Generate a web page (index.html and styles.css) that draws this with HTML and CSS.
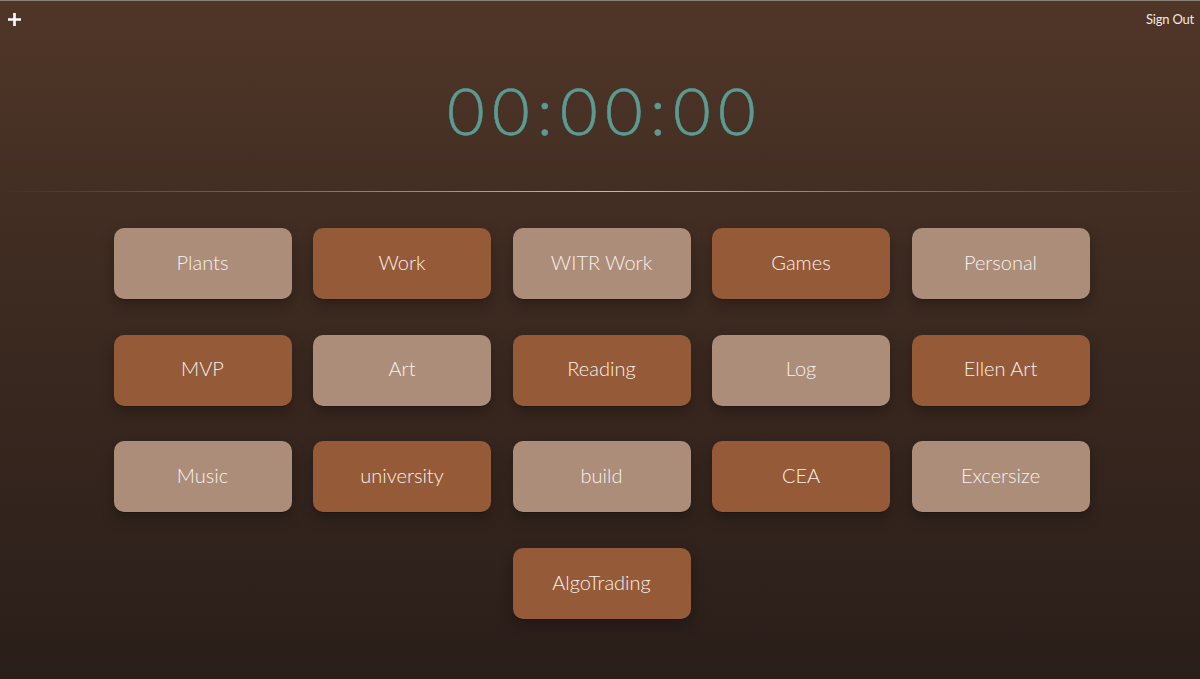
FILE: index.html
```html
<!DOCTYPE html>
<html lang="en">
<head>
<meta charset="utf-8">
<title>Timer</title>
<link rel="stylesheet" href="styles.css">
</head>
<body>
<div class="page">
  <header class="topbar">
    <button class="add" aria-label="Add">
      <svg width="15" height="15" viewBox="0 0 15 15"><path d="M7.5 1v13M1 7.5h13" stroke="#fff" stroke-width="2.6" stroke-linecap="butt"/></svg>
    </button>
    <a class="signout">Sign Out</a>
  </header>
  <div class="timer">00:00:00</div>
  <div class="divider"></div>
  <main class="grid">
    <button class="tile light">Plants</button>
    <button class="tile dark">Work</button>
    <button class="tile light">WITR Work</button>
    <button class="tile dark">Games</button>
    <button class="tile light">Personal</button>
    <button class="tile dark">MVP</button>
    <button class="tile light">Art</button>
    <button class="tile dark">Reading</button>
    <button class="tile light">Log</button>
    <button class="tile dark">Ellen Art</button>
    <button class="tile light">Music</button>
    <button class="tile dark">university</button>
    <button class="tile light">build</button>
    <button class="tile dark">CEA</button>
    <button class="tile light">Excersize</button>
    <button class="tile dark">AlgoTrading</button>
  </main>
</div>
</body>
</html>
```
FILE: styles.css
```css
html, body {
  margin: 0;
  padding: 0;
  height: 100%;
}
body {
  background: linear-gradient(180deg, #503628 0%, #3e2b21 40%, #2a1e1a 100%);
  border-top: 1px solid #8d8077;
  box-sizing: border-box;
  font-family: Lato, "Open Sans", sans-serif;
  color: #f4ece6;
  overflow: hidden;
}
.page {
  display: flex;
  flex-direction: column;
  height: 100%;
}
.topbar {
  display: flex;
  justify-content: space-between;
  align-items: flex-start;
  height: 40px;
}
.add {
  background: none;
  border: none;
  padding: 0;
  margin: 11px 0 0 7px;
  width: 15px;
  height: 15px;
  display: flex;
}
.signout {
  font-size: 13px;
  margin: 10px 6px 0 0;
  color: #f1e9e3;
  letter-spacing: -0.2px;
}
.timer {
  text-align: center;
  font-weight: 300;
  font-size: 65px;
  letter-spacing: 7.3px;
  padding-left: 10px;
  color: #5a9b93;
  line-height: 1;
  margin-top: 37px;
  -webkit-text-stroke: 0.6px #5a9b93;
}
.divider {
  height: 1px;
  margin: 48px 0 0;
  background: linear-gradient(90deg, rgba(200,185,170,0) 0%, rgba(200,185,170,0.45) 25%, rgba(225,210,195,0.85) 50%, rgba(200,185,170,0.45) 75%, rgba(200,185,170,0) 100%);
}
.grid {
  display: flex;
  flex-wrap: wrap;
  justify-content: center;
  column-gap: 21.5px;
  row-gap: 35.7px;
  width: 980px;
  margin: 36px auto 0;
  padding-left: 3px;
}
.tile {
  width: 178px;
  height: 71px;
  border: none;
  border-radius: 10px;
  font-family: Lato, "Open Sans", sans-serif;
  font-weight: 300;
  font-size: 20px;
  color: #f8f1ec;
  box-shadow: 0 1px 0 rgba(0,0,0,0.18), 0 6px 14px rgba(0,0,0,0.28);
  padding: 0 0 4px;
}
.tile.light {
  background: #ab8d7a;
}
.tile.dark {
  background: #955a38;
}
```
